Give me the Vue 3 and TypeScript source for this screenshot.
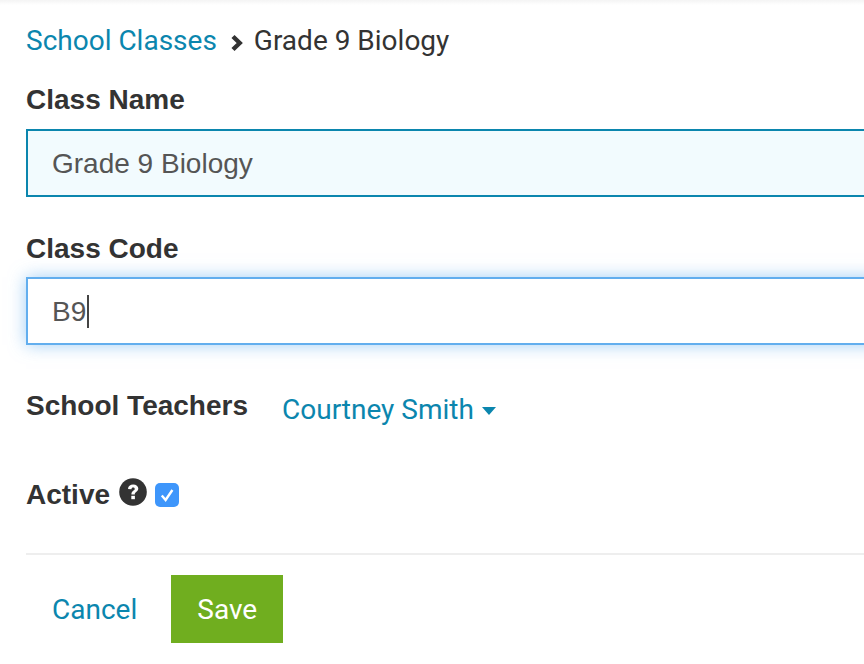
<script setup lang="ts">
const className = 'Grade 9 Biology'
const classCode = 'B9'
</script>

<template>
  <div class="page">
    <nav class="crumbs">
      <a class="link">School Classes</a>
      <svg class="chev" width="14" height="18" viewBox="0 0 14 18"><path d="M3 2.5 L9.7 9 L3 15.5" fill="none" stroke="#333" stroke-width="4.4"/></svg>
      <span>Grade 9 Biology</span>
    </nav>
    <label class="label first">Class Name</label>
    <div class="field filled">{{ className }}</div>
    <label class="label second">Class Code</label>
    <div class="field focus">{{ classCode }}<span class="caret"></span></div>
    <div class="row teachers">
      <label class="label">School Teachers</label>
      <a class="link drop">Courtney Smith<span class="tri"></span></a>
    </div>
    <div class="row active">
      <label class="label">Active</label>
      <svg class="help" width="28" height="28" viewBox="0 0 28 28">
        <circle cx="14" cy="14" r="13.8" fill="#333"/>
        <path d="M9 11 C9.1 7.9 11.2 6.4 14.2 6.4 C17.2 6.4 19.3 8.1 19.3 10.6 C19.3 12.6 18 13.5 16.9 14.3 C16 15 15.8 15.3 15.8 16.4 L12.4 16.4 C12.4 14.6 13 13.7 14.2 12.8 C15.2 12.1 15.7 11.7 15.7 11 C15.7 10.1 15 9.6 14.1 9.6 C13.1 9.6 12.6 10.2 12.4 11.2 Z" fill="#fff"/>
        <rect x="12.3" y="17.8" width="3.6" height="3.4" fill="#fff"/>
      </svg>
      <span class="check">
        <svg width="24" height="24" viewBox="0 0 24 24"><path d="M6.8 12.5 L10.6 17 L17.4 7" fill="none" stroke="#fff" stroke-width="2.4"/></svg>
      </span>
    </div>
    <hr class="rule" />
    <div class="actions">
      <a class="link cancel">Cancel</a>
      <button class="save" type="button">Save</button>
    </div>
  </div>
</template>

<style>
html, body { margin: 0; background: #fff; overflow: hidden; }
</style>

<style scoped>
.page {
  width: 864px;
  height: 664px;
  box-sizing: border-box;
  padding: 0 0 0 26px;
  overflow: hidden;
  background: linear-gradient(#f4f4f4, #fff 5px);
  font-family: Roboto, sans-serif;
  color: #333;
}
.crumbs {
  display: flex;
  align-items: center;
  height: 32px;
  padding-top: 24px;
  font-size: 28px;
  white-space: nowrap;
}
.link { color: #0b86ae; }
.chev { margin: 6px 10px 0 13px; }
.label {
  display: block;
  font-family: "Liberation Sans", Arial, sans-serif;
  font-weight: 700;
  font-size: 28px;
  line-height: 32px;
  color: #333;
  white-space: nowrap;
}
.first { margin-top: 28px; }
.second { margin-top: 36px; }
.field {
  position: relative;
  box-sizing: border-box;
  width: 860px;
  height: 68px;
  padding-left: 24px;
  font-family: "Liberation Sans", Arial, sans-serif;
  font-size: 28px;
  line-height: 66px;
  color: #555;
}
.first + .field { margin-top: 13px; }
.second + .field { margin-top: 12px; }
.filled { border: 2px solid #0b86ae; background: #f2fbfe; }
.focus {
  border: 2px solid #62aeee;
  background: #fff;
  box-shadow: 0 0 16px rgba(98, 174, 238, 0.6);
}
.caret {
  position: absolute;
  left: 59px;
  top: 16px;
  width: 1.5px;
  height: 33px;
  background: #444;
}
.row { display: flex; align-items: center; }
.teachers { margin-top: 43px; height: 36px; }
.drop { margin-left: 34px; font-size: 28px; position: relative; top: 3px; white-space: nowrap; }
.tri {
  display: inline-block;
  margin-left: 8px;
  vertical-align: 4px;
  border-top: 8px solid #0b86ae;
  border-left: 7.5px solid transparent;
  border-right: 7.5px solid transparent;
}
.active { margin-top: 53px; height: 36px; }
.help { margin-left: 9px; margin-top: -6px; }
.check {
  display: flex;
  width: 24px;
  height: 24px;
  margin-left: 8px;
  border-radius: 5px;
  background: #3e96fb;
}
.rule {
  width: 838px;
  height: 2px;
  margin: 40px 0 0;
  border: 0;
  background: #eee;
}
.actions { display: flex; align-items: center; margin-top: 20px; }
.cancel { margin-left: 26px; font-size: 28px; }
.save {
  width: 112px;
  height: 68px;
  margin-left: 34px;
  border: 0;
  background: #70ae1f;
  color: #fff;
  font-family: Roboto, sans-serif;
  font-size: 28px;
}
</style>
